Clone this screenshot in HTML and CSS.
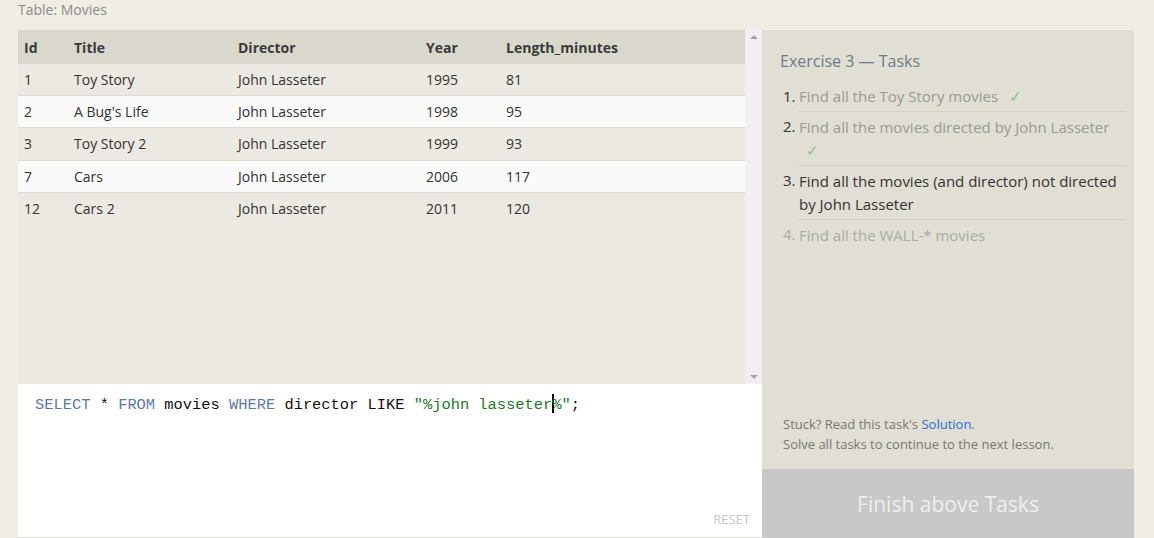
FILE: index.html
```html
<!DOCTYPE html>
<html>
<head>
<meta charset="utf-8">
<link rel="stylesheet" href="styles.css">
</head>
<body>
<div class="page">
  <div class="caption">Table: Movies</div>
  <div class="main">
    <div class="left">
      <div class="results">
        <div class="table-wrap">
          <table class="grid">
            <thead>
              <tr><th class="c-id">Id</th><th class="c-title">Title</th><th class="c-dir">Director</th><th class="c-year">Year</th><th>Length_minutes</th></tr>
            </thead>
            <tbody>
              <tr><td>1</td><td>Toy Story</td><td>John Lasseter</td><td>1995</td><td>81</td></tr>
              <tr><td>2</td><td>A Bug's Life</td><td>John Lasseter</td><td>1998</td><td>95</td></tr>
              <tr><td>3</td><td>Toy Story 2</td><td>John Lasseter</td><td>1999</td><td>93</td></tr>
              <tr><td>7</td><td>Cars</td><td>John Lasseter</td><td>2006</td><td>117</td></tr>
              <tr><td>12</td><td>Cars 2</td><td>John Lasseter</td><td>2011</td><td>120</td></tr>
            </tbody>
          </table>
        </div>
        <div class="scrollbar">
          <span class="arrow up"></span>
          <span class="arrow down"></span>
        </div>
      </div>
      <div class="editor">
        <div class="code"><span class="kw">SELECT</span> * <span class="kw">FROM</span> movies <span class="kw">WHERE</span> director LIKE <span class="str">"%john lasseter<span class="cursor"></span>%"</span>;</div>
        <div class="reset">RESET</div>
      </div>
    </div>
    <div class="panel">
      <div class="panel-body">
        <div class="ex-title">Exercise 3 — Tasks</div>
        <ol class="tasks">
          <li class="done"><span class="num">1.</span><span class="txt">Find all the Toy Story movies <span class="check">✓</span></span></li>
          <li class="done"><span class="num">2.</span><span class="txt">Find all the movies directed by John Lasseter <span class="check">✓</span></span></li>
          <li class="current"><span class="num">3.</span><span class="txt">Find all the movies (and director) not directed by John Lasseter</span></li>
          <li class="todo"><span class="num">4.</span><span class="txt">Find all the WALL-* movies</span></li>
        </ol>
        <div class="help">
          <div>Stuck? Read this task's <a class="link">Solution</a>.</div>
          <div>Solve all tasks to continue to the next lesson.</div>
        </div>
      </div>
      <div class="finish">Finish above Tasks</div>
    </div>
  </div>
</div>
</body>
</html>
```
FILE: styles.css
```css
html, body {
  margin: 0;
  padding: 0;
  background: #f0ede5;
}
body {
  font-family: "Open Sans", "Liberation Sans", sans-serif;
  width: 1154px;
  height: 538px;
  overflow: hidden;
}
.page {
  padding-left: 18px;
}
.caption {
  height: 30px;
  line-height: 20px;
  font-size: 14px;
  color: #8a8a8a;
}
.main {
  display: flex;
  height: 508px;
}
.left {
  width: 744px;
  display: flex;
  flex-direction: column;
}
.results {
  height: 354px;
  display: flex;
  background: #ebe9e1;
}
.table-wrap {
  flex: 1;
}
.grid {
  width: 100%;
  border-collapse: collapse;
  font-size: 14px;
  color: #333;
}
.grid th {
  background: #dad8cc;
  text-align: left;
  font-weight: 700;
  height: 34px;
  padding: 0 0 0 6px;
  color: #3a3a3a;
}
.grid td {
  height: 31.2px;
  padding: 0 0 0 6px;
  border-bottom: 1px solid #dedcd4;
}
.grid tbody tr:last-child td {
  border-bottom: none;
}
.grid tbody tr:nth-child(even) td {
  background: #fafafa;
}
.c-id { width: 44px; }
.c-title { width: 158px; }
.c-dir { width: 182px; }
.c-year { width: 74px; }
.scrollbar {
  width: 17px;
  background: #f0f0f0;
  display: flex;
  flex-direction: column;
  justify-content: space-between;
  align-items: center;
  padding: 5px 0 5px;
}
.arrow {
  width: 0;
  height: 0;
  border-left: 4px solid transparent;
  border-right: 4px solid transparent;
}
.arrow.up { border-bottom: 4px solid #a3a3a3; }
.arrow.down { border-top: 4px solid #a3a3a3; }
.editor {
  flex: 1;
  background: #fff;
  border-bottom: 1px solid #e0ded6;
  display: flex;
  flex-direction: column;
  justify-content: space-between;
  padding: 10px 12px 9px 17px;
}
.code {
  font-family: "Liberation Mono", "DejaVu Sans Mono", monospace;
  font-size: 15.4px;
  line-height: 20px;
  color: #111;
}
.kw { color: #5f78ad; }
.str { color: #1d7a28; }
.cursor {
  display: inline-block;
  width: 0;
  height: 19px;
  border-left: 2px solid #000;
  vertical-align: -4px;
  margin-right: -2px;
}
.reset {
  align-self: flex-end;
  font-size: 13px;
  color: #c8c8c8;
}
.panel {
  width: 372px;
  background: #e1dfd3;
  display: flex;
  flex-direction: column;
}
.panel-body {
  flex: 1;
  padding: 20px 7px 0 18px;
  display: flex;
  flex-direction: column;
}
.ex-title {
  font-size: 16px;
  color: #6e7a8a;
  line-height: 22px;
  margin-bottom: 9px;
}
.tasks {
  list-style: none;
  margin: 0;
  padding: 0;
  font-size: 15px;
  line-height: 23px;
}
.tasks li {
  display: flex;
}
.tasks li + li .txt {
  border-top: 1px solid #d3d1c5;
}
.tasks li .txt { padding: 3.5px 0; flex: 1; }
.num {
  width: 16px;
  padding: 3.5px 0 3.5px 3px;
  color: #333;
  text-align: left;
}
.done .txt { color: #999; }
.current .txt { color: #333; }
.todo .txt, .todo .num { color: #aaa; }
.check {
  color: #7fc48a;
  margin-left: 7px;
}
.help {
  margin-top: auto;
  padding: 0 0 15px 3px;
  font-size: 13px;
  line-height: 20px;
  color: #777;
}
.link { color: #2a6fdb; }
.finish {
  height: 69px;
  background: #c8c8c8;
  color: #eeeeee;
  font-size: 21px;
  display: flex;
  align-items: center;
  justify-content: center;
}
```
